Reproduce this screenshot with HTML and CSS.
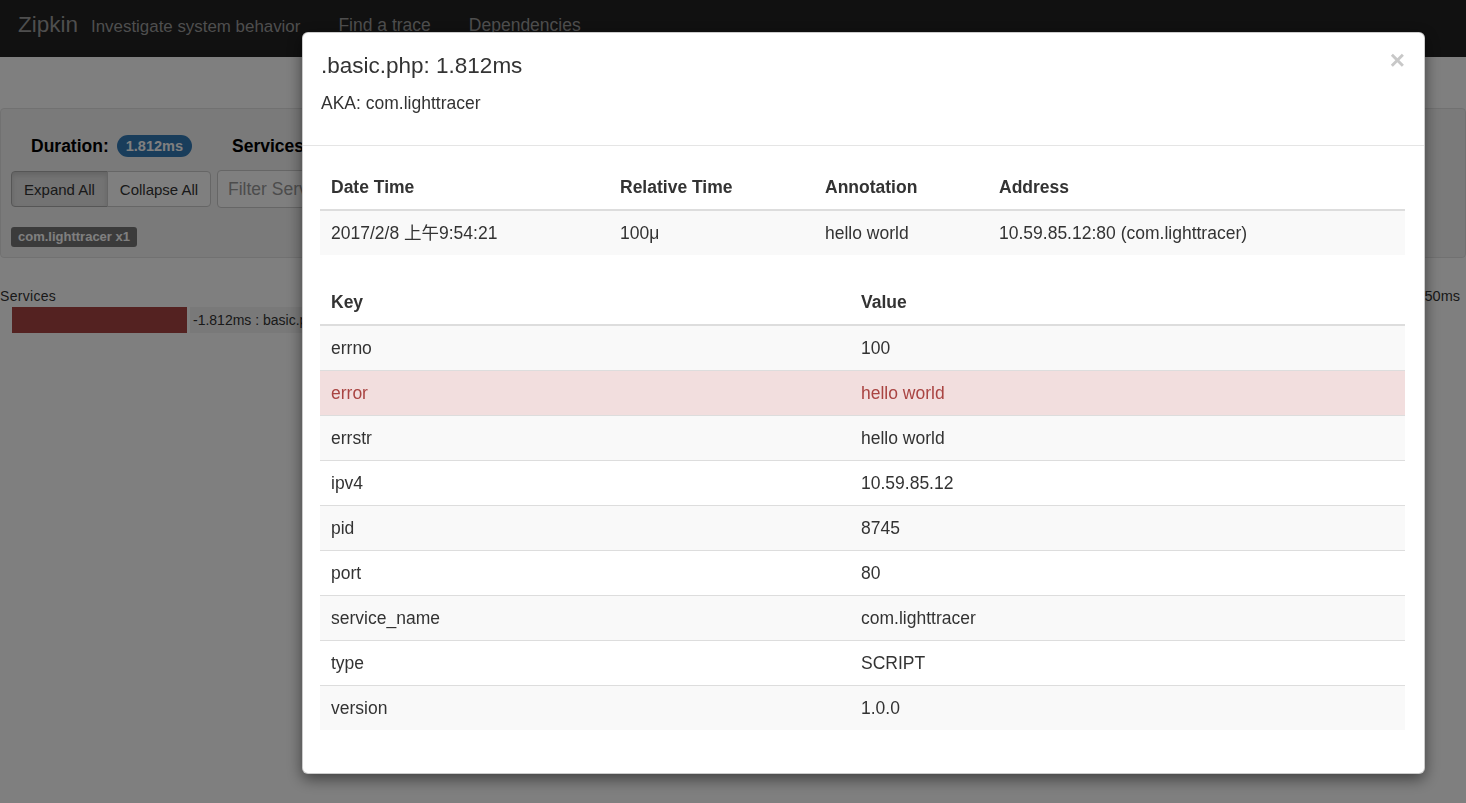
FILE: index.html
```html
<!DOCTYPE html>
<html>
<head>
<meta charset="utf-8">
<title>Zipkin</title>
<link rel="stylesheet" href="styles.css">
</head>
<body>
<div class="page">
  <nav class="navbar">
    <span class="brand">Zipkin</span>
    <span class="tagline">Investigate system behavior</span>
    <a class="nav-link">Find a trace</a>
    <a class="nav-link">Dependencies</a>
  </nav>
  <div class="strip"></div>
  <div class="well">
    <div class="summary">
      <span class="sum-label">Duration:</span>
      <span class="badge">1.812ms</span>
      <span class="sum-label">Services:</span>
      <span class="badge">1</span>
      <span class="sum-label">Depth:</span>
      <span class="badge">1</span>
    </div>
    <div class="controls">
      <div class="btn-group">
        <button class="btn active">Expand All</button>
        <button class="btn">Collapse All</button>
      </div>
      <input class="filter" placeholder="Filter Services...">
    </div>
    <div class="labels"><span class="label">com.lighttracer x1</span></div>
  </div>
  <div class="timeline">
    <div class="tl-head">
      <span class="tl-title">Services</span>
      <span class="tl-tick">1.450ms</span>
    </div>
    <div class="tl-row">
      <div class="bar"></div>
      <span class="span-text">-1.812ms : basic.php</span>
    </div>
  </div>
</div>
<div class="backdrop"></div>
<div class="modal">
  <div class="modal-header">
    <span class="close">&times;</span>
    <h4 class="modal-title">.basic.php: 1.812ms</h4>
    <p class="aka">AKA: com.lighttracer</p>
  </div>
  <div class="modal-body">
    <table class="table ann-table">
      <colgroup>
        <col class="c-date"><col class="c-rel"><col class="c-ann"><col>
      </colgroup>
      <thead>
        <tr><th>Date Time</th><th>Relative Time</th><th>Annotation</th><th>Address</th></tr>
      </thead>
      <tbody>
        <tr><td>2017/2/8 上午9:54:21</td><td>100μ</td><td>hello world</td><td>10.59.85.12:80 (com.lighttracer)</td></tr>
      </tbody>
    </table>
    <table class="table kv-table">
      <colgroup><col class="c-key"><col></colgroup>
      <thead>
        <tr><th>Key</th><th>Value</th></tr>
      </thead>
      <tbody>
        <tr><td>errno</td><td>100</td></tr>
        <tr class="danger"><td>error</td><td>hello world</td></tr>
        <tr><td>errstr</td><td>hello world</td></tr>
        <tr><td>ipv4</td><td>10.59.85.12</td></tr>
        <tr><td>pid</td><td>8745</td></tr>
        <tr><td>port</td><td>80</td></tr>
        <tr><td>service_name</td><td>com.lighttracer</td></tr>
        <tr><td>type</td><td>SCRIPT</td></tr>
        <tr><td>version</td><td>1.0.0</td></tr>
      </tbody>
    </table>
  </div>
</div>
</body>
</html>
```
FILE: styles.css
```css
* { box-sizing: border-box; }
html, body { margin: 0; padding: 0; }
body {
  font-family: "Liberation Sans", Arial, "Noto Sans CJK SC", sans-serif;
  font-size: 17.5px;
  color: #333;
  background: #fff;
  width: 1466px;
  height: 803px;
  overflow: hidden;
}

/* ---------- background page ---------- */
.navbar {
  height: 57px;
  background: #222;
  display: flex;
  align-items: center;
  padding: 0 0 8px 18px;
  color: #9d9d9d;
}
.brand { font-size: 22.5px; margin-right: 13px; }
.tagline { font-size: 16.9px; margin-right: 38px; padding-top: 5px; }
.nav-link { font-size: 17.5px; margin-right: 38px; padding-top: 2px; }

.strip { height: 51px; background: #fff; }

.well {
  height: 150px;
  background: #f5f5f5;
  border: 1px solid #e3e3e3;
  border-radius: 4px;
  padding: 24px 0 0 10px;
}
.summary { display: flex; align-items: center; height: 26px; padding-left: 20px; }
.sum-label { font-weight: bold; font-size: 17.5px; color: #000; margin-right: 8px; }
.badge {
  background: #337ab7;
  color: #fff;
  font-weight: bold;
  font-size: 14.5px;
  border-radius: 12px;
  padding: 3px 9px;
  margin-right: 40px;
}
.controls { display: flex; margin-top: 12px; height: 37px; }
.btn-group { display: flex; }
.btn {
  font-family: inherit;
  font-size: 15px;
  color: #333;
  background: #fff;
  border: 1px solid #ccc;
  padding: 0;
  height: 36px;
  white-space: nowrap;
  text-align: center;
}
.btn:first-child { border-radius: 4px 0 0 4px; width: 97px; }
.btn:last-child { border-radius: 0 4px 4px 0; margin-left: -1px; width: 104px; }
.btn.active { background: #e6e6e6; border-color: #adadad; box-shadow: inset 0 3px 5px rgba(0,0,0,.125); }
.filter {
  margin-left: 6px;
  margin-top: -1px;
  width: 300px;
  font-family: inherit;
  font-size: 17.5px;
  border: 1px solid #ccc;
  border-radius: 4px;
  padding: 6px 10px;
  height: 38px;
}
.filter::placeholder { color: #999; }
.labels { margin-top: 17px; }
.label {
  display: inline-block;
  background: #777;
  color: #fff;
  font-weight: bold;
  font-size: 13px;
  padding: 2px 7px 3px;
  border-radius: 3px;
}

.timeline { padding-top: 26px; }
.tl-head { display: flex; justify-content: space-between; height: 23px; align-items: center; font-size: 14px; }
.tl-title { letter-spacing: 0.3px; }
.tl-tick { margin-right: 6px; font-size: 14.5px; }
.tl-row { display: flex; align-items: center; height: 26px; padding-left: 12px; }
.bar { width: 175px; height: 26px; background: #a94442; }
.span-text { font-size: 14px; background: #f3f3f3; height: 26px; line-height: 26px; padding-left: 3px; margin-left: 3px; width: 300px; }

/* ---------- overlay ---------- */
.backdrop {
  position: fixed;
  inset: 0;
  background: rgba(0,0,0,.5);
}
.modal {
  position: fixed;
  left: 302px;
  top: 32px;
  width: 1123px;
  height: 742px;
  background: #fff;
  border: 1px solid rgba(0,0,0,.2);
  border-radius: 6px;
  box-shadow: 0 5px 15px rgba(0,0,0,.5);
}
.modal-header {
  position: relative;
  padding: 19px 19px 0 18px;
  height: 113px;
  border-bottom: 1px solid #e5e5e5;
}
.close {
  position: absolute;
  right: 19px;
  top: 14px;
  font-size: 26px;
  font-weight: bold;
  color: #c8c8c8;
  line-height: 1;
}
.modal-title { margin: 0; font-size: 22.5px; font-weight: normal; line-height: 27px; }
.aka { margin: 12px 0 0; line-height: 24px; font-size: 17.5px; }

.modal-body { padding: 19px 19px 0 17px; }
.table { width: 100%; border-collapse: collapse; table-layout: fixed; }
.ann-table { margin-bottom: 25px; }
.c-date { width: 289px; }
.c-rel { width: 205px; }
.c-ann { width: 174px; }
.c-key { width: 530px; }
.table th, .table td {
  text-align: left;
  padding: 10px 11px;
  line-height: 24px;
  font-size: 17.5px;
  vertical-align: top;
}
.table th { font-weight: bold; border-bottom: 2px solid #ddd; }
.table td { border-top: 1px solid #ddd; }
.table tbody tr:first-child td { border-top: none; }
.table tbody tr:nth-child(odd) { background: #f9f9f9; }
.table tbody tr.danger { background: #f2dede; color: #a94442; }
```
